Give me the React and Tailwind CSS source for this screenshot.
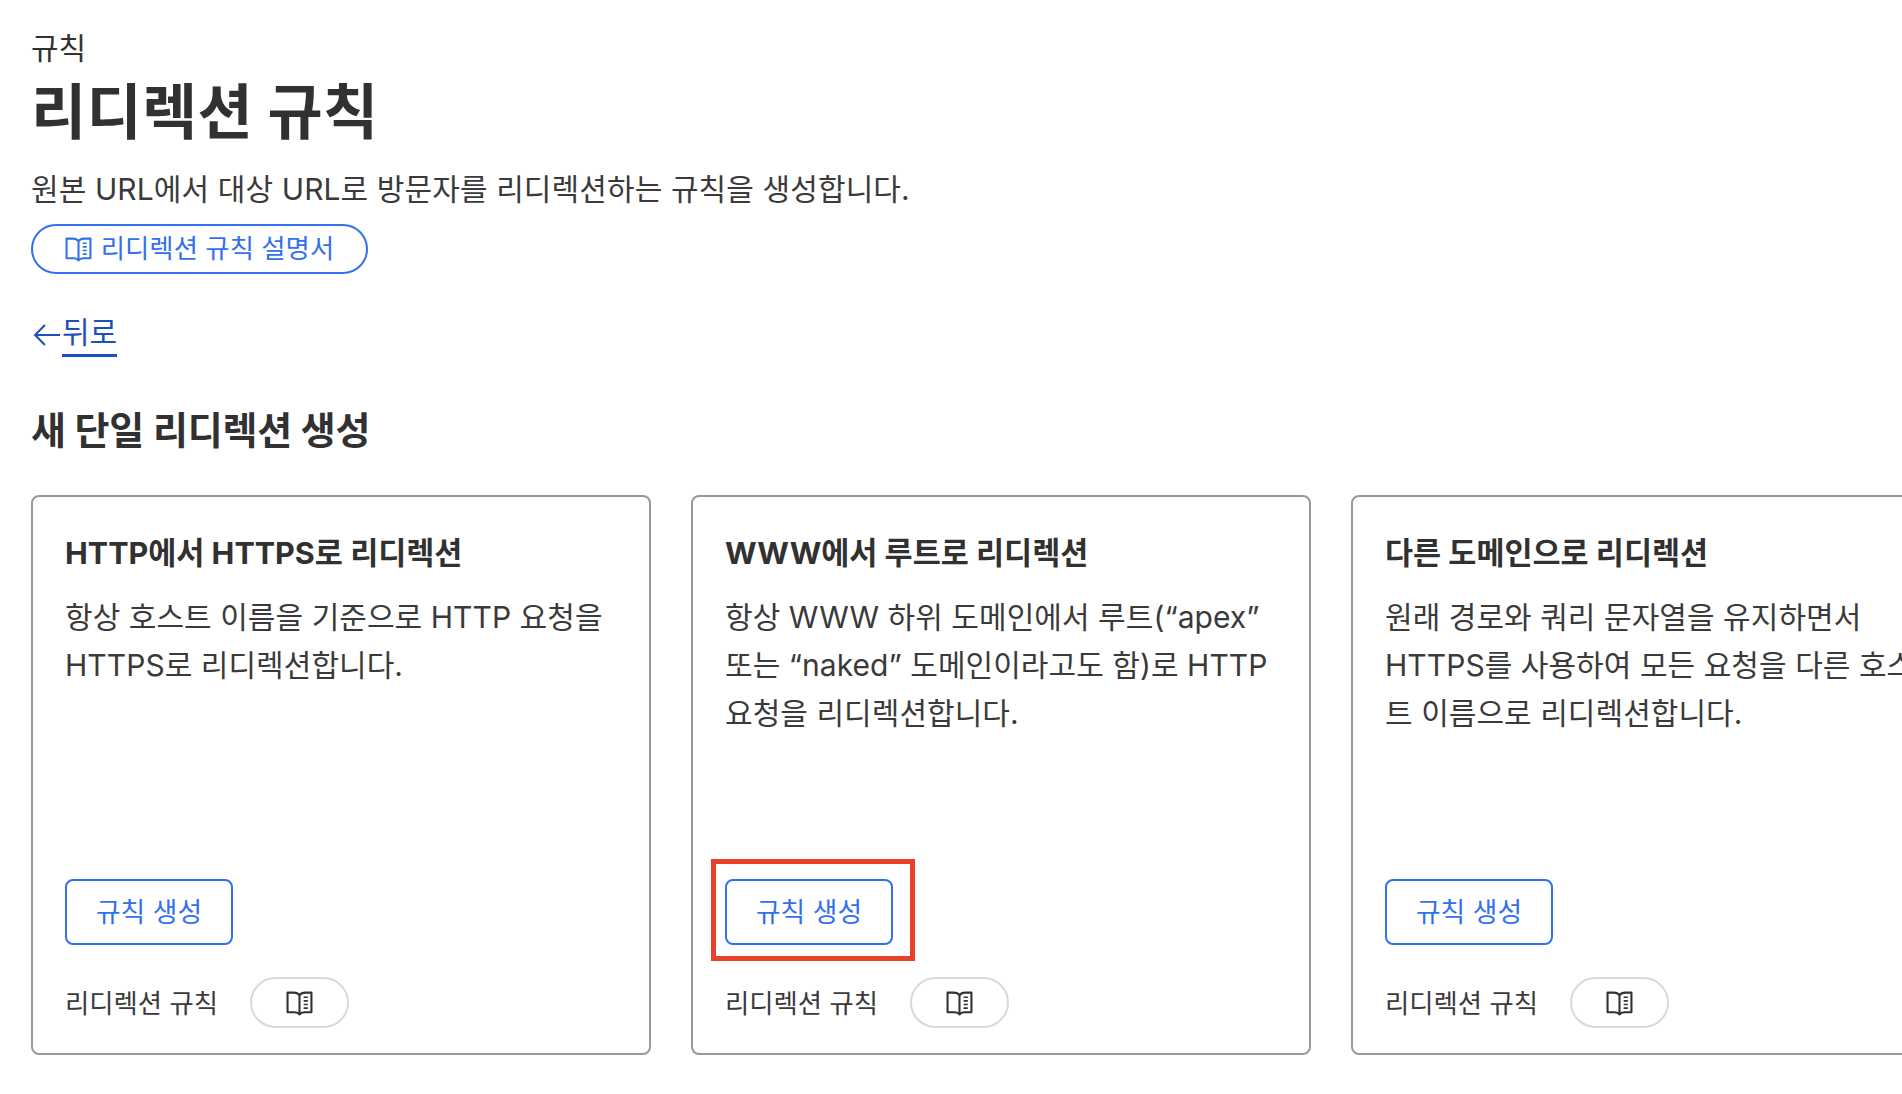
const BookIcon = ({ className }) => (
  <svg viewBox="0 0 26 24" fill="none" stroke="currentColor" strokeWidth="2" className={className}>
    <path d="M13 4C12 2.600 10 1.500 7.500 1.500H1.500v19h7c2 0 3.500.6 4.500 2 1-1.400 2.500-2 4.500-2h7v-19h-6C16 1.500 14 2.600 13 4z" strokeLinejoin="round" />
    <path d="M13 4v18.500" />
    <path d="M17 6h4M17 9.500h4M17 13h4M17 16.500h4" strokeWidth="1.600" />
  </svg>
);

const cards = [
  {
    title: "HTTP에서 HTTPS로 리디렉션",
    text: "항상 호스트 이름을 기준으로 HTTP 요청을 HTTPS로 리디렉션합니다.",
  },
  {
    title: "WWW에서 루트로 리디렉션",
    text: "항상 WWW 하위 도메인에서 루트(“apex” 또는 “naked” 도메인이라고도 함)로 HTTP 요청을 리디렉션합니다.",
    marked: true,
  },
  {
    title: "다른 도메인으로 리디렉션",
    text: "원래 경로와 쿼리 문자열을 유지하면서 HTTPS를 사용하여 모든 요청을 다른 호스트 이름으로 리디렉션합니다.",
  },
];

const Card = ({ card }) => (
  <div className="w-[620px] h-[560px] shrink-0 flex flex-col border-2 border-[#999] rounded-[8px] px-[32px] pt-[34px] pb-[25px] bg-white">
    <h3 className="text-[30.500px] leading-[44px] font-bold text-[#313131]">{card.title}</h3>
    <p className="mt-[18px] text-[30px] leading-[48px] text-[#3a3a3a] tracking-[0.05px]">{card.text}</p>
    <div className="mt-auto relative w-[168px]">
      <button className="w-[168px] h-[66px] border-2 border-[#3370f0] rounded-[8px] text-[#3370f0] text-[26.800px] bg-white">
        규칙 생성
      </button>
      {card.marked && (
        <div className="absolute -left-[14px] -top-[20px] w-[204px] h-[102px] border-[5px] border-[#e8432a]" />
      )}
    </div>
    <div className="mt-[32px] flex items-center gap-[32px]">
      <span className="text-[26.400px] leading-[36px] text-[#3a3a3a]">리디렉션 규칙</span>
      <button className="w-[99px] h-[51px] border-2 border-[#d9d9d9] rounded-full flex items-center justify-center text-[#313131]">
        <BookIcon className="w-[27px] h-[25px] mt-[1px]" />
      </button>
    </div>
  </div>
);

const App = () => {
  return (
    <div className="h-screen overflow-hidden bg-white px-[31px] pt-[28px] font-['Inter','Noto_Sans_CJK_KR',sans-serif] text-[#313131]">
      <p className="text-[30px] leading-[40px]">규칙</p>
      <h1 className="mt-[8px] text-[60px] leading-[72px] font-bold tracking-[0.3px]">리디렉션 규칙</h1>
      <p className="mt-[19px] text-[30px] leading-[44px] text-[#3a3a3a] tracking-[0.1px]">
        원본 URL에서 대상 URL로 방문자를 리디렉션하는 규칙을 생성합니다.
      </p>
      <button className="mt-[13px] w-[337px] h-[50px] border-2 border-[#3370f0] rounded-full flex items-center justify-center gap-[9px] text-[#3370f0] text-[26.400px]">
        <BookIcon className="w-[27px] h-[25px]" />
        리디렉션 규칙 설명서
      </button>
      <div className="mt-[37px] ml-[2px] flex items-center gap-[1px] text-[#1d4fc0]">
        <svg viewBox="0 0 28 24" fill="none" stroke="currentColor" strokeWidth="2" className="w-[28px] h-[24px] mt-[2px]">
          <path d="M27 12H3M12 2L2 12l10 10" />
        </svg>
        <a className="text-[30px] leading-[43px] border-b-[3px] border-[#1d4fc0]">뒤로</a>
      </div>
      <h2 className="mt-[49px] text-[38px] leading-[48px] font-bold text-[#313131] tracking-[-0.2px]">새 단일 리디렉션 생성</h2>
      <div className="mt-[41px] flex gap-[40px]">
        {cards.map((card) => (
          <Card key={card.title} card={card} />
        ))}
      </div>
    </div>
  );
};

export default App;
